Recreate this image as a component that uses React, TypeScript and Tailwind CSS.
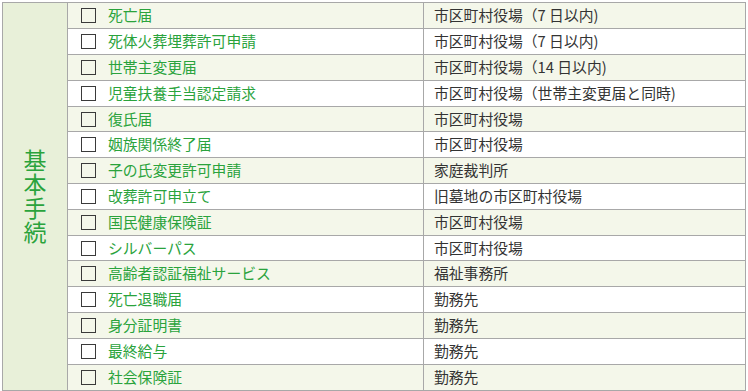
import React from "react";

const rows: { name: string; place: string }[] = [
  { name: "死亡届", place: "市区町村役場（7 日以内)" },
  { name: "死体火葬埋葬許可申請", place: "市区町村役場（7 日以内)" },
  { name: "世帯主変更届", place: "市区町村役場（14 日以内)" },
  { name: "児童扶養手当認定請求", place: "市区町村役場（世帯主変更届と同時)" },
  { name: "復氏届", place: "市区町村役場" },
  { name: "姻族関係終了届", place: "市区町村役場" },
  { name: "子の氏変更許可申請", place: "家庭裁判所" },
  { name: "改葬許可申立て", place: "旧墓地の市区町村役場" },
  { name: "国民健康保険証", place: "市区町村役場" },
  { name: "シルバーパス", place: "市区町村役場" },
  { name: "高齢者認証福祉サービス", place: "福祉事務所" },
  { name: "死亡退職届", place: "勤務先" },
  { name: "身分証明書", place: "勤務先" },
  { name: "最終給与", place: "勤務先" },
  { name: "社会保険証", place: "勤務先" },
];

const shortRows = new Set([4, 9, 14]);

export default function App() {
  return (
    <div
      className="w-[748px] h-[391px] bg-white pt-[2px] pl-[2px] overflow-hidden"
      style={{ fontFamily: '"Noto Sans CJK JP", "Noto Sans", sans-serif' }}
    >
      <div className="flex w-[744px] border border-[#a8a8a8]">
        <div className="w-[65px] shrink-0 bg-[#e8f0d9] border-r border-[#a8a8a8] flex items-center justify-center text-[#2aa33c]">
          <span className="[writing-mode:vertical-rl] text-[23px] leading-[24px] tracking-[1px]">
            基本手続
          </span>
        </div>
        <div className="flex-1 flex flex-col">
          {rows.map((r, i) => (
            <div
              key={i}
              className={
                "grid grid-cols-[356px_1fr] text-[14.8px] " +
                (i % 2 === 0 ? "bg-[#f4f7ea] " : "bg-white ") +
                (i < rows.length - 1 ? "border-b border-[#a8a8a8] " : "") +
                (shortRows.has(i) ? "h-[25px]" : "h-[26px]")
              }
            >
              <div className="flex items-center pl-[13px] gap-[12px] border-r border-[#a8a8a8]">
                <span className="w-[15px] h-[15px] border-[1.5px] border-[#3a3a3a] shrink-0" />
                <span className="text-[#2aa33c] leading-none">{r.name}</span>
              </div>
              <div className="flex items-center pl-[10px] text-[#333] leading-none">
                {r.place}
              </div>
            </div>
          ))}
        </div>
      </div>
    </div>
  );
}
